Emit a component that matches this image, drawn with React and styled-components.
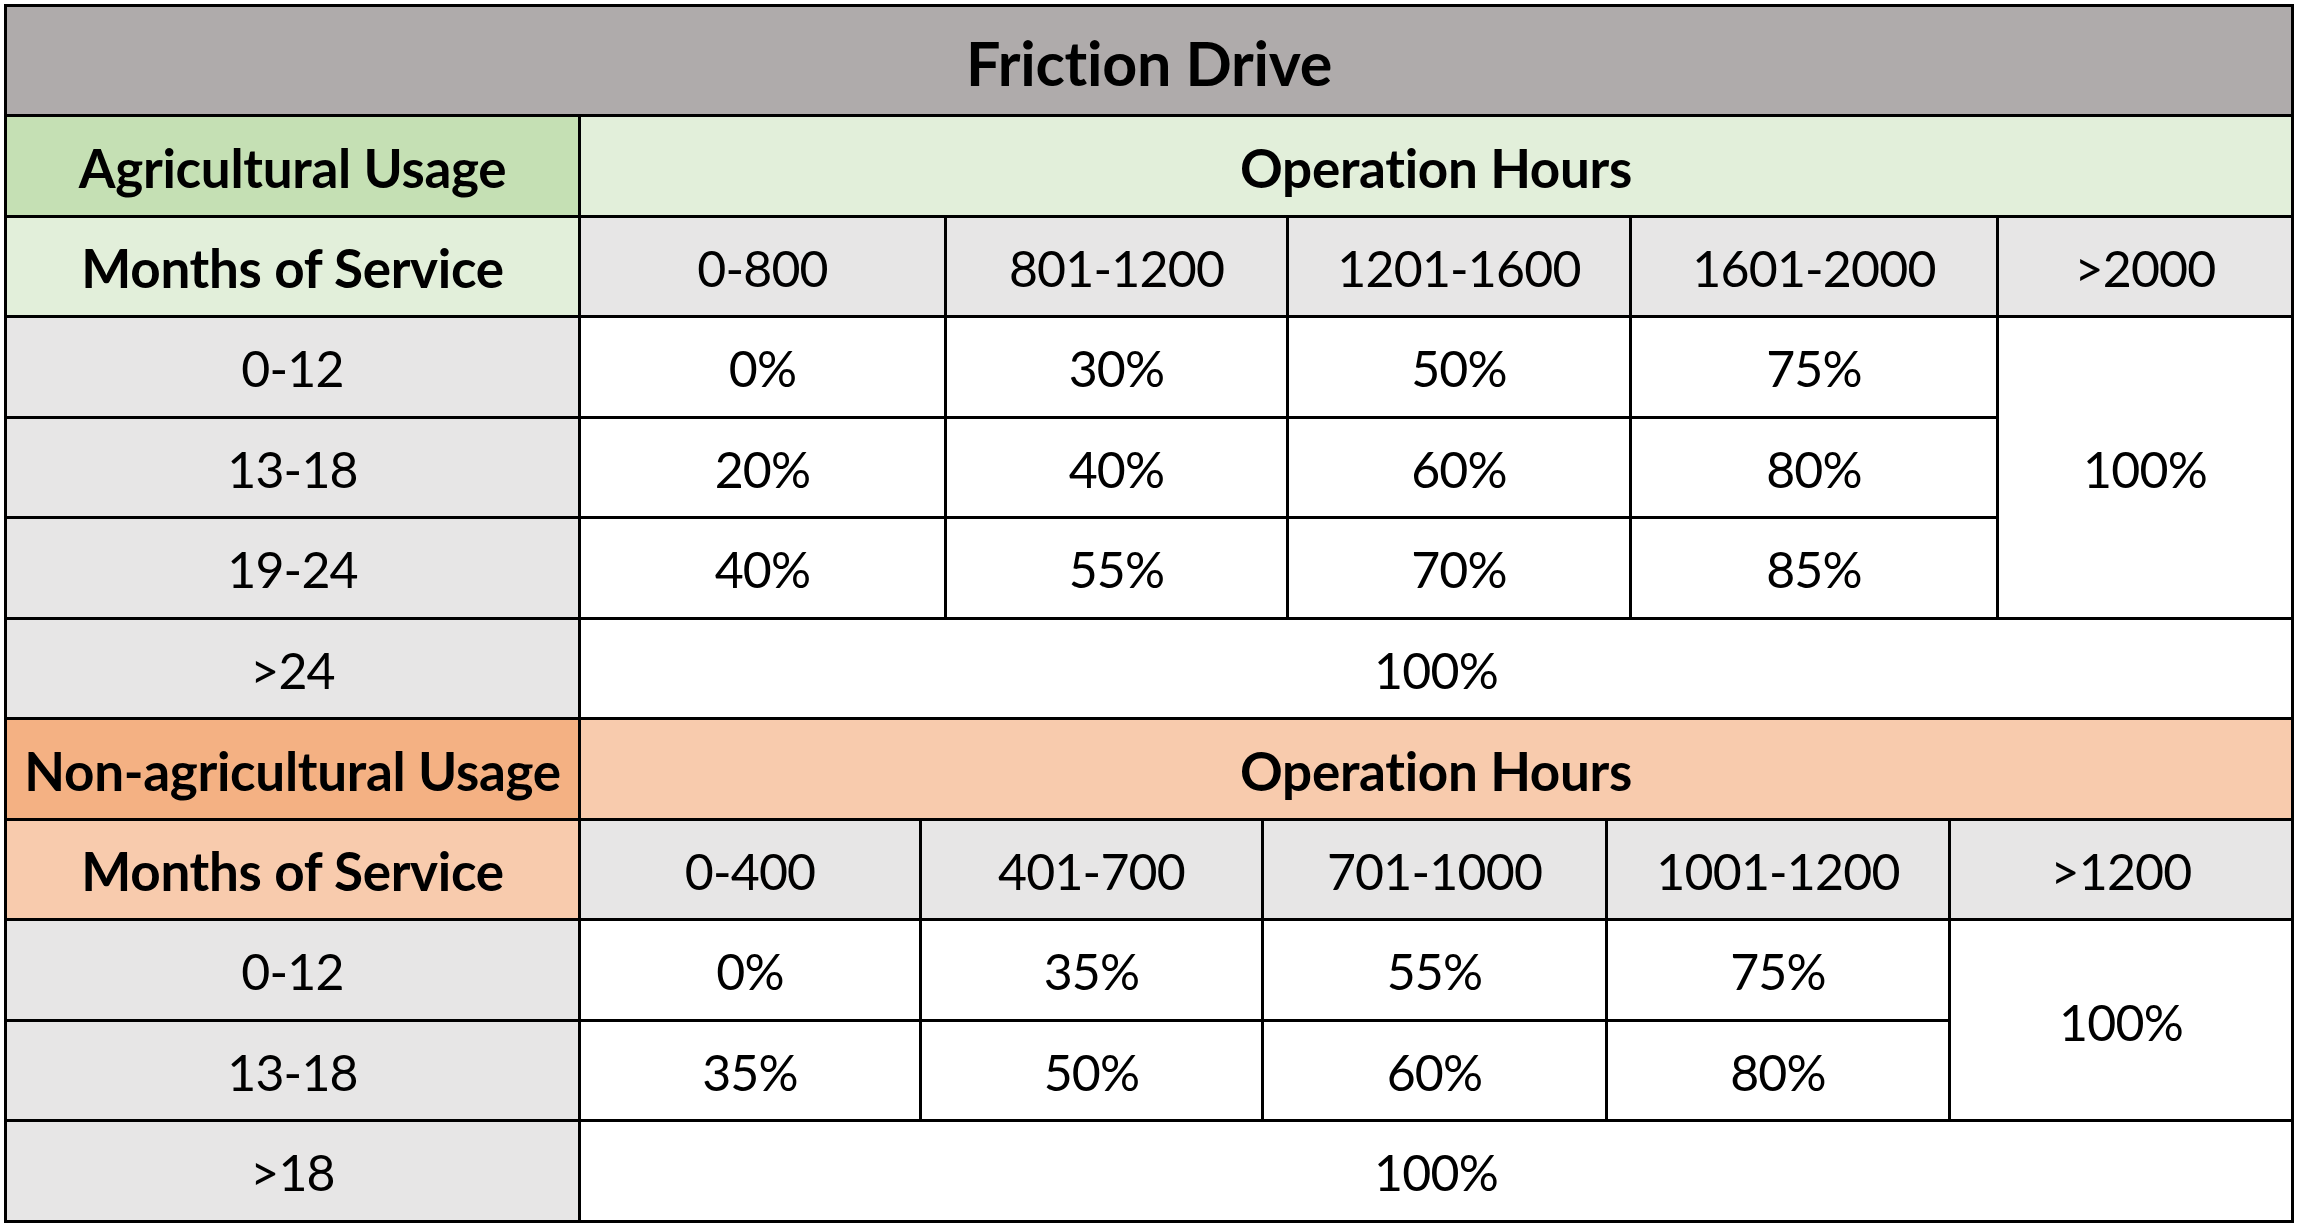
import React from 'react';
import styled, { createGlobalStyle } from 'styled-components';

const GlobalStyle = createGlobalStyle`
  html, body {
    margin: 0;
    padding: 0;
    background: #ffffff;
  }
  body {
    font-family: Lato, "Open Sans", "Liberation Sans", sans-serif;
    color: #000;
  }
`;

const Page = styled.div`
  width: 2298px;
  height: 1226px;
  padding: 4px;
  box-sizing: border-box;
`;

const Table = styled.div`
  display: grid;
  grid-template-rows: 107px auto auto;
  gap: 3px;
  width: 2290px;
  box-sizing: border-box;
  border: 3px solid #000;
  background: #000;
`;

const Section = styled.div`
  display: grid;
  grid-template-columns: ${(p) => p.$cols};
  grid-auto-rows: 97.5px;
  gap: 3px;
  background: #000;
`;

const Cell = styled.div`
  display: flex;
  align-items: center;
  justify-content: center;
  padding-top: 3px;
  background: ${(p) => p.$bg || '#ffffff'};
  font-size: ${(p) => (p.$title ? '61px' : p.$bold ? '53px' : '50px')};
  font-weight: ${(p) => (p.$bold ? 700 : 400)};
  letter-spacing: ${(p) => (p.$bold ? '-0.3px' : '-0.8px')};
  white-space: nowrap;
  grid-column: ${(p) => p.$col || 'auto'};
  grid-row: ${(p) => p.$row || 'auto'};
`;

const GRAY = '#e7e6e6';
const TITLE = '#afabab';

const sections = [
  {
    cols: '571px 363px 339px 340px 364px 292px',
    label: 'Agricultural Usage',
    labelBg: '#c5e0b4',
    lightBg: '#e2efda',
    ranges: ['0-800', '801-1200', '1201-1600', '1601-2000', '>2000'],
    rows: [
      ['0-12', ['0%', '30%', '50%', '75%']],
      ['13-18', ['20%', '40%', '60%', '80%']],
      ['19-24', ['40%', '55%', '70%', '85%']],
    ],
    last: '>24',
  },
  {
    cols: '571px 338px 339px 341px 340px 340px',
    label: 'Non-agricultural Usage',
    labelBg: '#f4b183',
    lightBg: '#f8cbad',
    ranges: ['0-400', '401-700', '701-1000', '1001-1200', '>1200'],
    rows: [
      ['0-12', ['0%', '35%', '55%', '75%']],
      ['13-18', ['35%', '50%', '60%', '80%']],
    ],
    last: '>18',
  },
];

function UsageSection({ s }) {
  const n = s.rows.length;
  return (
    <Section $cols={s.cols}>
      <Cell $bold $bg={s.labelBg}>{s.label}</Cell>
      <Cell $bold $bg={s.lightBg} $col="2 / span 5">Operation Hours</Cell>

      <Cell $bold $bg={s.lightBg}>Months of Service</Cell>
      {s.ranges.map((r) => (
        <Cell key={r} $bg={GRAY}>{r}</Cell>
      ))}

      {s.rows.map(([months, values], i) => (
        <React.Fragment key={months}>
          <Cell $bg={GRAY} $row={`${i + 3}`} $col="1">{months}</Cell>
          {values.map((v, j) => (
            <Cell key={j} $row={`${i + 3}`} $col={`${j + 2}`}>{v}</Cell>
          ))}
        </React.Fragment>
      ))}
      <Cell $row={`3 / span ${n}`} $col="6">100%</Cell>

      <Cell $bg={GRAY}>{s.last}</Cell>
      <Cell $col="2 / span 5">100%</Cell>
    </Section>
  );
}

export default function App() {
  return (
    <>
      <GlobalStyle />
      <Page>
        <Table>
          <Cell $bold $title $bg={TITLE}>Friction Drive</Cell>
          {sections.map((s) => (
            <UsageSection key={s.label} s={s} />
          ))}
        </Table>
      </Page>
    </>
  );
}
